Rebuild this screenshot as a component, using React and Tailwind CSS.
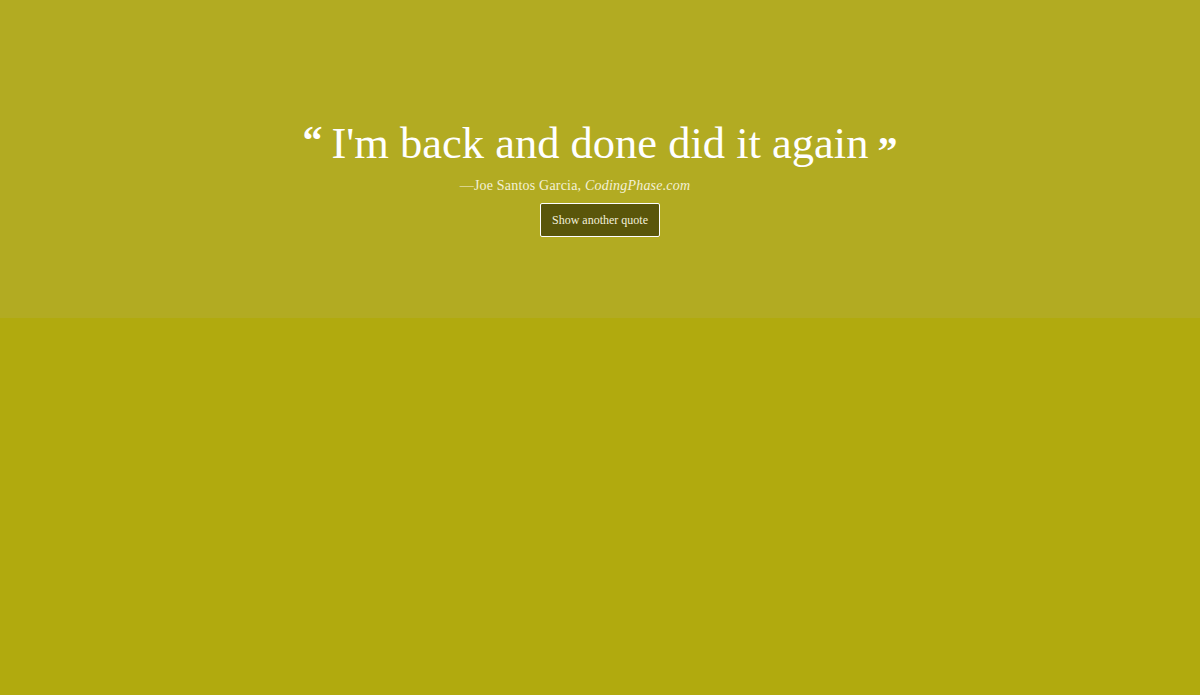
export default function App() {
  return (
    <div className="min-h-[695px] w-full bg-[#b1aa0e]" style={{ fontFamily: '"Liberation Serif", "DejaVu Serif", serif' }}>
      <section className="flex h-[318px] flex-col items-center bg-[#b2ab22] pt-[117px]">
        <h1 className="flex items-start text-[44.5px] leading-[52px] text-white">
          <span className="mr-[9px] mt-[4px] text-[40px] font-bold leading-[40px]">&ldquo;</span>
          <span>I'm back and done did it again</span>
          <span className="ml-[9px] mt-[14px] text-[40px] font-bold leading-[40px]">&rdquo;</span>
        </h1>
        <p className="mr-[50px] mt-[4px] text-[14px] tracking-[0.2px] text-[#f4f1d6]">
          &mdash;Joe Santos Garcia, <em>CodingPhase.com</em>
        </p>
        <button className="mt-[7px] h-[34px] w-[120px] rounded-[2px] border border-white bg-[#5a560a] text-[12px] text-[#f3f0dc]">
          Show another quote
        </button>
      </section>
    </div>
  );
}
